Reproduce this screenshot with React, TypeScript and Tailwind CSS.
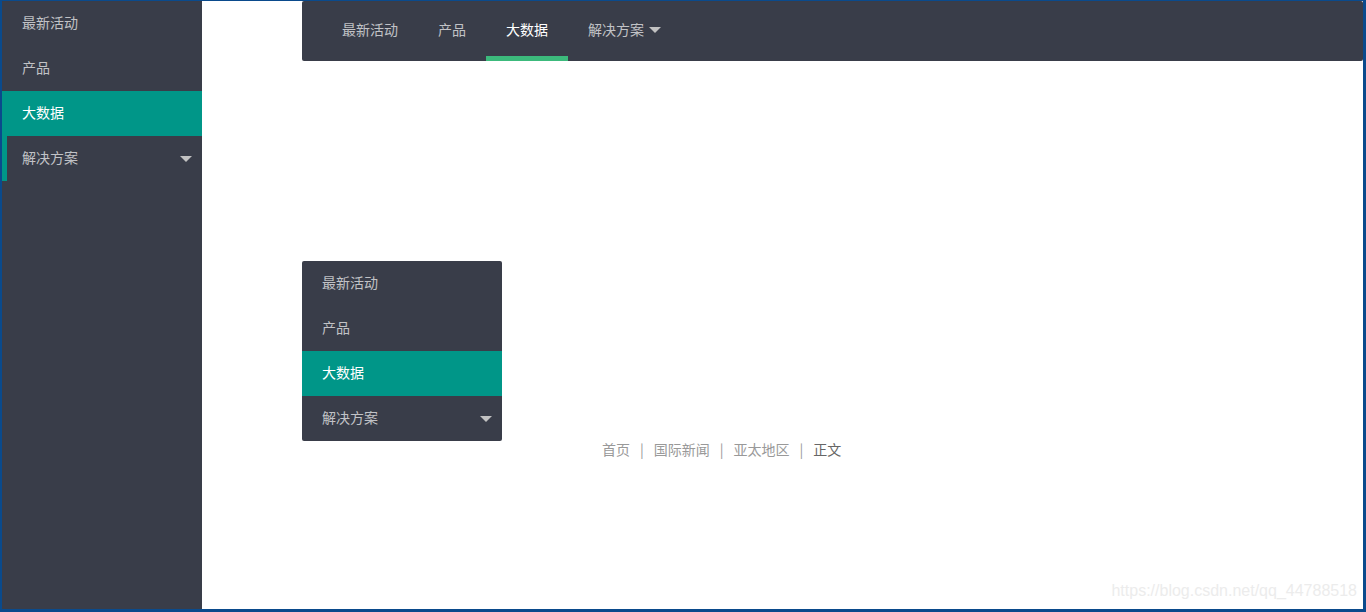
import React from 'react';

const items = ['最新活动', '产品', '大数据', '解决方案'];

const Caret: React.FC<{ className?: string }> = ({ className = '' }) => (
  <span
    className={`block w-0 h-0 border-l-[6px] border-r-[6px] border-t-[6px] border-l-transparent border-r-transparent border-t-[#c2c2c2] ${className}`}
  />
);

const VerticalNav: React.FC<{ className?: string; tree?: boolean }> = ({ className = '', tree }) => (
  <ul className={`w-[200px] bg-[#393D49] ${className}`}>
    {items.map((label, i) => {
      const active = i === 2;
      const last = i === 3;
      return (
        <li
          key={label}
          className={`relative h-[45px] flex items-center pl-5 pr-[10px] pb-1 text-sm ${
            active ? 'bg-[#009688] text-white' : 'text-[rgba(255,255,255,0.7)]'
          }`}
        >
          {tree && last && <span className="absolute left-0 top-0 h-full w-[5px] bg-[#009688]" />}
          <span className="flex-1">{label}</span>
          {last && <Caret className="mt-[4px]" />}
        </li>
      );
    })}
  </ul>
);

const HorizontalNav = () => (
  <ul className="h-[60px] bg-[#393D49] px-5 flex rounded-[2px]">
    {items.map((label, i) => {
      const active = i === 2;
      return (
        <li
          key={label}
          className={`relative h-full flex items-center px-5 pb-1 text-sm ${
            active ? 'text-white' : 'text-[rgba(255,255,255,0.7)]'
          }`}
        >
          {label}
          {i === 3 && <Caret className="ml-[5px] mt-[2px]" />}
          {active && <span className="absolute left-0 bottom-0 w-full h-[5px] bg-[#3cba7c]" />}
        </li>
      );
    })}
  </ul>
);

const crumbs = ['首页', '国际新闻', '亚太地区'];

export default function App() {
  return (
    <div
      className="h-[612px] w-[1366px] bg-[#0a4a8c] pt-px pl-[2px] pr-[3px] pb-[3px] overflow-hidden"
      style={{ fontFamily: '"Noto Sans CJK SC", "Noto Sans", sans-serif' }}
    >
      <div className="h-full w-full bg-white flex relative">
        <VerticalNav className="h-full" tree />
        <div className="flex-1 pl-[100px]">
          <HorizontalNav />
          <div className="mt-[200px]">
            <VerticalNav className="rounded-[2px] overflow-hidden" />
            <div className="pl-[300px] h-5 flex items-center text-sm -mt-[2px]">
              {crumbs.map((c) => (
                <React.Fragment key={c}>
                  <span className="text-[#999]">{c}</span>
                  <span className="mx-[10px] text-[#999]">|</span>
                </React.Fragment>
              ))}
              <span className="text-[#666]">正文</span>
            </div>
          </div>
        </div>
        <div
          className="absolute right-[6px] bottom-[6px] text-[16px] text-[#ececec]"
          style={{ fontFamily: '"Liberation Sans", Arial, sans-serif' }}
        >
          https://blog.csdn.net/qq_44788518
        </div>
      </div>
    </div>
  );
}
